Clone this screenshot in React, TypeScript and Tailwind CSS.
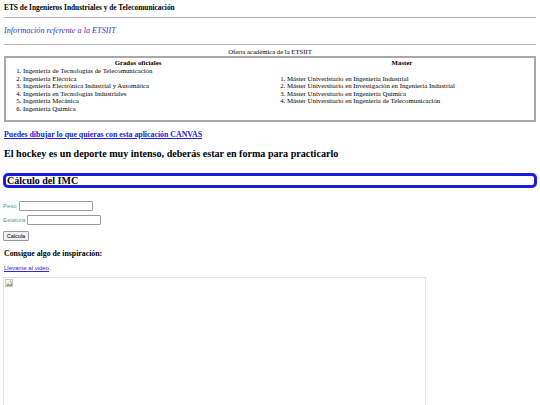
import React from "react";

const serif = { fontFamily: '"Liberation Serif", "Times New Roman", serif' };
const sans = { fontFamily: '"Liberation Sans", Arial, sans-serif' };

export default function App() {
  const grados = [
    "Ingeniería de Tecnologías de Telecomunicación",
    "Ingeniería Eléctrica",
    "Ingeniería Electrónica Industrial y Automática",
    "Ingeniería en Tecnologías Industriales",
    "Ingeniería Mecánica",
    "Ingeniería Química",
  ];
  const master = [
    "Máster Univeristario en Ingeniería Industrial",
    "Máster Universitario en Investigación en Ingeniería Industrial",
    "Máster Universitario en Ingeniería Química",
    "Máster Universitario en Ingeniería de Telecomunicación",
  ];
  return (
    <div className="w-[540px] h-[405px] overflow-hidden bg-white text-black" style={serif}>
      <div className="px-[4px] pt-[3px]">
        <div className="text-[7.4px] font-bold leading-[9px]">ETS de Ingenieros Industriales y de Telecomunicación</div>
        <div className="mt-[5px] h-px bg-[#b0b0b0]" />
        <div className="mt-[7px] text-[8.2px] italic text-[#3535c8] leading-[11px]">Información referente a la ETSIIT</div>
        <div className="mt-[8px] h-px bg-[#b0b0b0]" />
        <div className="mt-[2px] text-center text-[6.7px] leading-[9px]">Oferta académica de la ETSIIT</div>
        <div className="flex border-2 border-[#a8a8a8] h-[66px]">
          <div className="flex-1 flex flex-col">
            <div className="text-center font-bold text-[6.8px] leading-[9px]">Grados oficiales</div>
            <ol className="list-decimal pl-[17px] text-[6.8px] leading-[7.5px]">
              {grados.map((g) => (
                <li key={g}>{g}</li>
              ))}
            </ol>
          </div>
          <div className="flex-1 flex flex-col">
            <div className="text-center font-bold text-[6.8px] leading-[9px]">Master</div>
            <ol className="list-decimal pl-[17px] mt-[7.5px] text-[6.8px] leading-[7.5px]">
              {master.map((g) => (
                <li key={g}>{g}</li>
              ))}
            </ol>
          </div>
        </div>
        <div className="mt-[8px] text-[7.85px] font-bold underline text-[#2020e0] leading-[10px]">
          Puedes dibujar lo que quieras con esta aplicación CANVAS
        </div>
        <div className="mt-[7px] text-[10.1px] font-bold leading-[13px]">
          El hockey es un deporte muy intenso, deberás estar en forma para practicarlo
        </div>
      </div>
      <div className="mx-[3px] mt-[13px] border-[3px] border-[#1c1ce0] rounded-[5px] h-[15px] flex items-center">
        <span className="pl-[1px] text-[10px] font-bold leading-[11px]">Cálculo del IMC</span>
      </div>
      <div className="px-[3px]" style={sans}>
        <div className="mt-[13px] flex items-center gap-[2px]">
          <span className="text-[6px] text-[#5f9c8c]">Peso</span>
          <div className="w-[74px] h-[10px] border border-[#9a9a9a] rounded-[1px]" />
        </div>
        <div className="mt-[4px] flex items-center gap-[2px]">
          <span className="text-[6px] text-[#5f9c8c]">Estatura</span>
          <div className="w-[74px] h-[10px] border border-[#9a9a9a] rounded-[1px]" />
        </div>
        <div className="mt-[6px] w-[26px] h-[10px] border border-[#9a9a9a] bg-[#efefef] rounded-[1px] text-[5.5px] flex items-center justify-center">
          Calcula
        </div>
        <div className="mt-[7px] pl-[1px] text-[7.8px] font-bold leading-[11px]" style={serif}>
          Consigue algo de inspiración:
        </div>
        <div className="mt-[5px] pl-[1px] text-[6px] underline text-[#2a2ad8] leading-[8px]">Llevame al video</div>
        <div className="mt-[5px] w-[423px] h-[140px] border border-[#e2e2e2] relative">
          <svg className="absolute left-[1px] top-[1px]" width="8" height="8" viewBox="0 0 8 8">
            <rect x="0.5" y="0.5" width="7" height="7" fill="#f4f4f4" stroke="#c8c8c8" />
            <path d="M1 7 L3 4 L5 6 L7 3 L7 7 Z" fill="#7ab06a" />
            <circle cx="5.5" cy="2.5" r="1" fill="#9bbbd8" />
          </svg>
        </div>
      </div>
    </div>
  );
}
